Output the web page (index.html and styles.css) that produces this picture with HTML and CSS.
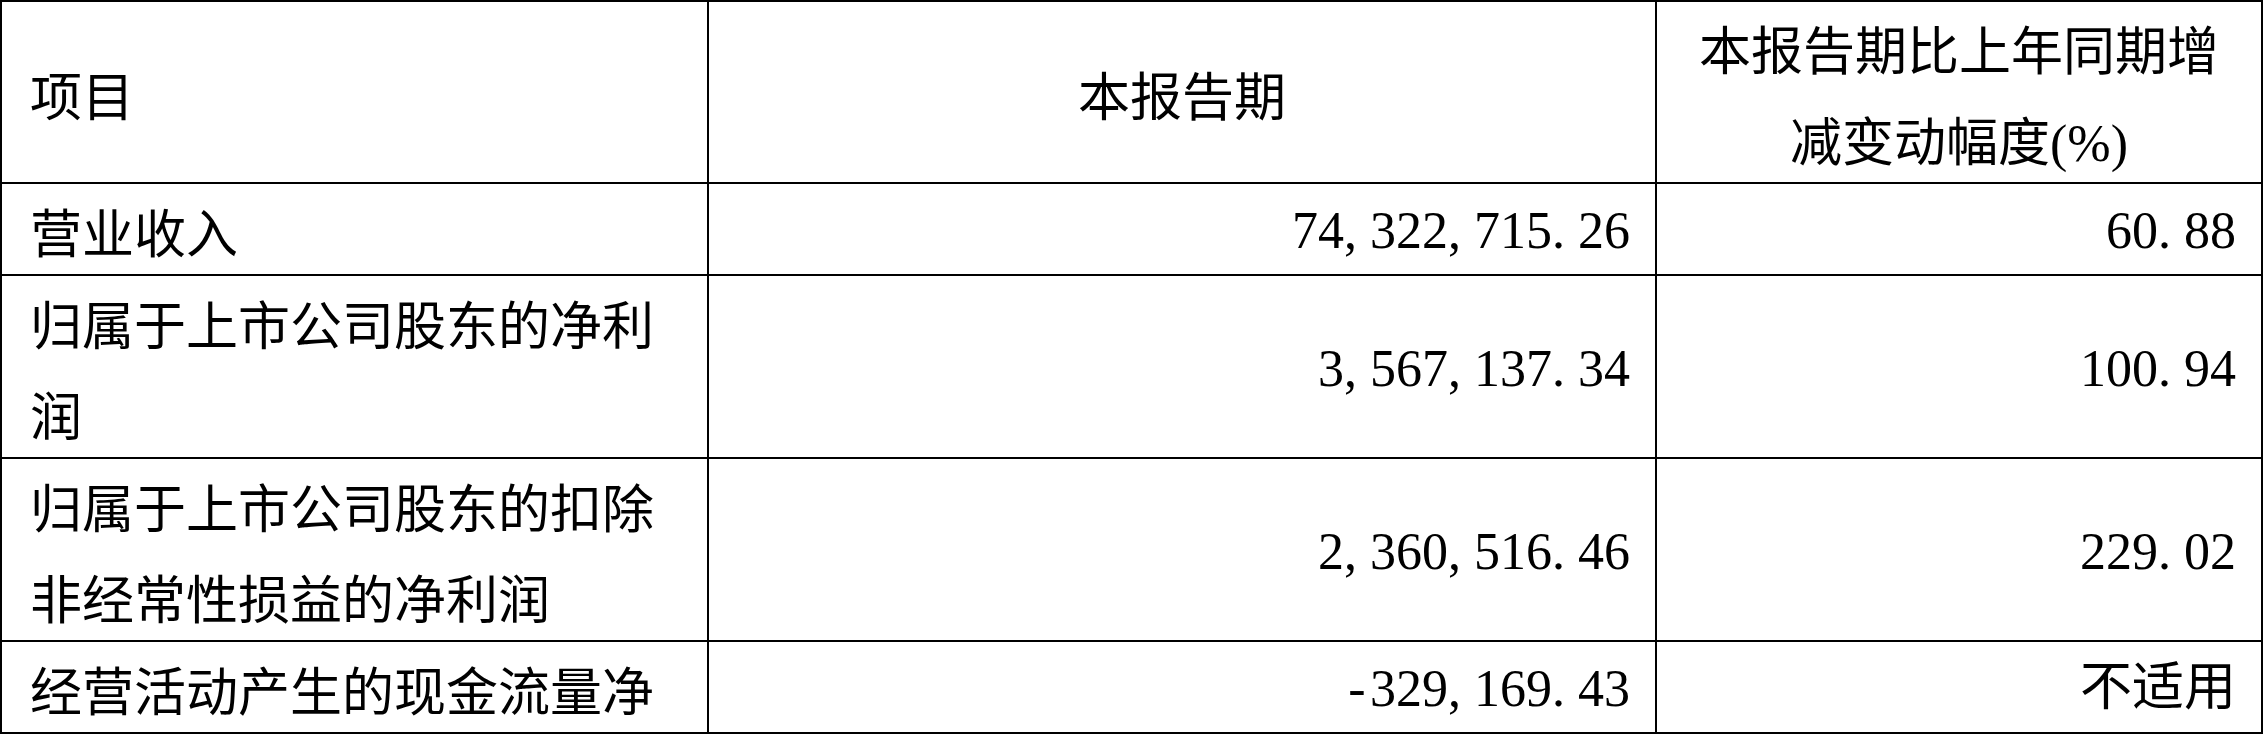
FILE: index.html
```html
<!DOCTYPE html>
<html lang="zh-CN">
<head>
<meta charset="utf-8">
<title>主要会计数据</title>
<link rel="stylesheet" href="styles.css">
</head>
<body>
<div class="sheet">
  <div class="cell label head">项目</div>
  <div class="cell center head">本报告期</div>
  <div class="cell center head change">本报告期比上年同期增减变动幅度(%)</div>

  <div class="cell label">营业收入</div>
  <div class="cell num">74<span class="sep">,</span>322<span class="sep">,</span>715<span class="sep">.</span>26</div>
  <div class="cell num">60<span class="sep">.</span>88</div>

  <div class="cell label">归属于上市公司股东的净利润</div>
  <div class="cell num">3<span class="sep">,</span>567<span class="sep">,</span>137<span class="sep">.</span>34</div>
  <div class="cell num">100<span class="sep">.</span>94</div>

  <div class="cell label">归属于上市公司股东的扣除非经常性损益的净利润</div>
  <div class="cell num">2<span class="sep">,</span>360<span class="sep">,</span>516<span class="sep">.</span>46</div>
  <div class="cell num">229<span class="sep">.</span>02</div>

  <div class="cell label">经营活动产生的现金流量净</div>
  <div class="cell num"><span class="sep minus">-</span>329<span class="sep">,</span>169<span class="sep">.</span>43</div>
  <div class="cell text-end">不适用</div>
</div>
</body>
</html>
```

FILE: styles.css
```css
html, body {
  margin: 0;
  padding: 0;
  background: #ffffff;
}

body {
  overflow: hidden;
}

.sheet {
  display: grid;
  grid-template-columns: 707px 948px 606px;
  grid-template-rows: 182px 92px 183px 183px 92px;
  border-top: 2px solid #000;
  border-left: 2px solid #000;
  width: 2261px;
  font-family: "Liberation Serif", "Noto Sans CJK SC", serif;
  font-size: 52px;
  line-height: 91px;
  color: #000;
}

.cell {
  box-sizing: border-box;
  display: flex;
  align-items: center;
  border-right: 2px solid #000;
  border-bottom: 2px solid #000;
  min-width: 0;
}

.label {
  justify-content: flex-start;
  padding: 12px 29px 0 28px;
}

.center {
  justify-content: center;
  text-align: center;
  padding-top: 12px;
}

.change {
  padding: 12px 40px 0 40px;
}

.num {
  justify-content: flex-end;
  padding: 3px 25px 0 0;
  white-space: nowrap;
}

.text-end {
  justify-content: flex-end;
  padding: 0 25px 0 0;
}

.sep {
  display: inline-block;
  width: 0.5em;
  text-align: left;
}

.minus {
  text-align: center;
}
```
